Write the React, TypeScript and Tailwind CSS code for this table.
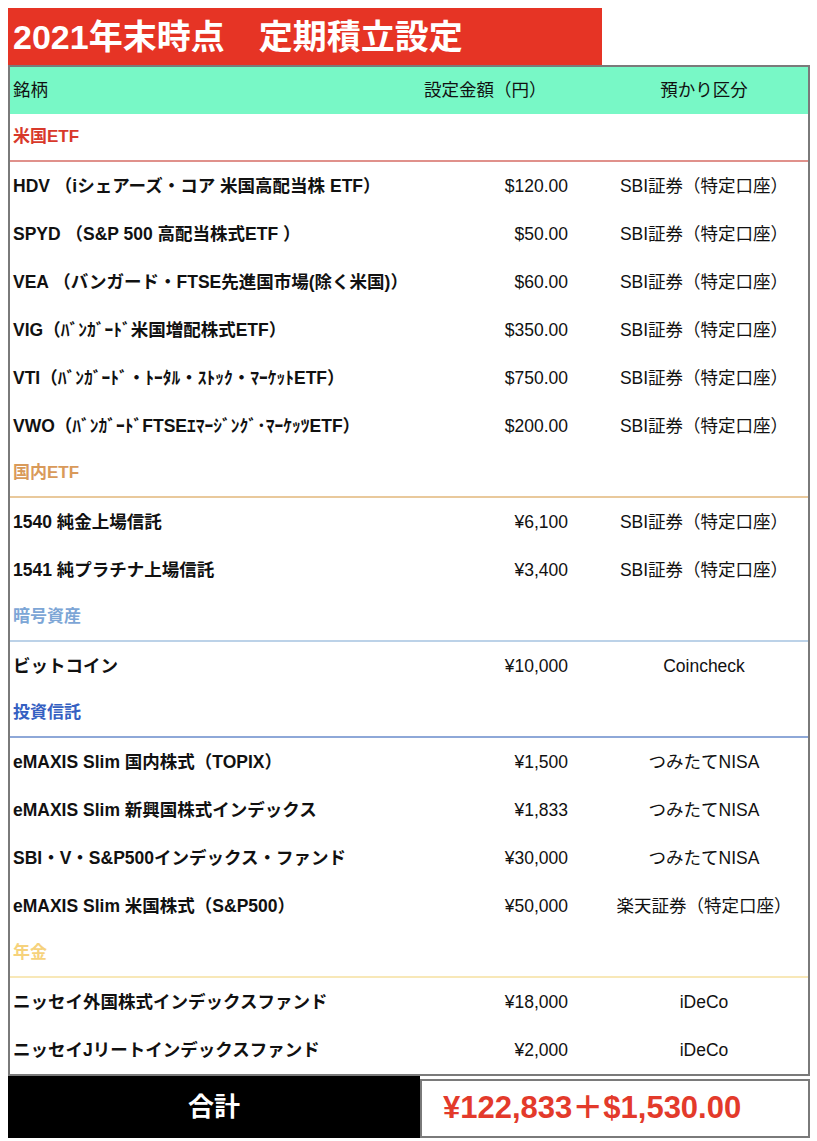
import React from "react";

type Row =
  | { kind: "section"; label: string; text: string; line: string }
  | { kind: "item"; name: string; amount: string; place: string };

const rows: Row[] = [
  { kind: "section", label: "米国ETF", text: "text-[#d8392b]", line: "border-[#e0918b]" },
  { kind: "item", name: "HDV （iシェアーズ・コア 米国高配当株 ETF）", amount: "$120.00", place: "SBI証券（特定口座）" },
  { kind: "item", name: "SPYD （S&P 500 高配当株式ETF ）", amount: "$50.00", place: "SBI証券（特定口座）" },
  { kind: "item", name: "VEA （バンガード・FTSE先進国市場(除く米国)）", amount: "$60.00", place: "SBI証券（特定口座）" },
  { kind: "item", name: "VIG（ﾊﾞﾝｶﾞｰﾄﾞ米国増配株式ETF）", amount: "$350.00", place: "SBI証券（特定口座）" },
  { kind: "item", name: "VTI（ﾊﾞﾝｶﾞｰﾄﾞ・ﾄｰﾀﾙ・ｽﾄｯｸ・ﾏｰｹｯﾄETF）", amount: "$750.00", place: "SBI証券（特定口座）" },
  { kind: "item", name: "VWO（ﾊﾞﾝｶﾞｰﾄﾞFTSEｴﾏｰｼﾞﾝｸﾞ･ﾏｰｹｯﾂETF）", amount: "$200.00", place: "SBI証券（特定口座）" },
  { kind: "section", label: "国内ETF", text: "text-[#d99a5a]", line: "border-[#e9c99c]" },
  { kind: "item", name: "1540 純金上場信託", amount: "¥6,100", place: "SBI証券（特定口座）" },
  { kind: "item", name: "1541 純プラチナ上場信託", amount: "¥3,400", place: "SBI証券（特定口座）" },
  { kind: "section", label: "暗号資産", text: "text-[#7da6d6]", line: "border-[#bcd2e8]" },
  { kind: "item", name: "ビットコイン", amount: "¥10,000", place: "Coincheck" },
  { kind: "section", label: "投資信託", text: "text-[#3560c2]", line: "border-[#8ea8d8]" },
  { kind: "item", name: "eMAXIS Slim 国内株式（TOPIX）", amount: "¥1,500", place: "つみたてNISA" },
  { kind: "item", name: "eMAXIS Slim 新興国株式インデックス", amount: "¥1,833", place: "つみたてNISA" },
  { kind: "item", name: "SBI・V・S&P500インデックス・ファンド", amount: "¥30,000", place: "つみたてNISA" },
  { kind: "item", name: "eMAXIS Slim 米国株式（S&P500）", amount: "¥50,000", place: "楽天証券（特定口座）" },
  { kind: "section", label: "年金", text: "text-[#f6d27c]", line: "border-[#f8e8b8]" },
  { kind: "item", name: "ニッセイ外国株式インデックスファンド", amount: "¥18,000", place: "iDeCo" },
  { kind: "item", name: "ニッセイJリートインデックスファンド", amount: "¥2,000", place: "iDeCo" },
];

const font = { fontFamily: '"Liberation Sans", "Noto Sans CJK JP", sans-serif' };

export default function App() {
  return (
    <div className="bg-white w-[817px] min-h-[1141px] p-2" style={font}>
      <div className="w-[594px] h-[57px] bg-[#e63425] flex items-center pl-[5px]">
        <span className="text-white font-bold text-[34px] leading-none">2021年末時点　定期積立設定</span>
      </div>
      <div className="w-[802px] border-2 border-[#7a7a7a]">
        <div className="grid grid-cols-[390px_200px_1fr] h-[47px] items-center bg-[#78f8c6] text-[17.5px] text-[#111]">
          <div className="pl-[3px]">銘柄</div>
          <div className="pl-[24px]">設定金額（円）</div>
          <div className="text-center">預かり区分</div>
        </div>
        {rows.map((r, i) =>
          r.kind === "section" ? (
            <div key={i} className={`h-[48px] flex items-center pl-[3px] border-b-2 ${r.line}`}>
              <span className={`text-[17px] font-bold ${r.text}`}>{r.label}</span>
            </div>
          ) : (
            <div key={i} className="grid grid-cols-[390px_200px_1fr] h-[48px] items-center text-[17.5px] text-[#111]">
              <div className="pl-[3px] font-bold whitespace-nowrap">{r.name}</div>
              <div className="text-right pr-[32px]">{r.amount}</div>
              <div className="text-center">{r.place}</div>
            </div>
          )
        )}
      </div>
      <div className="flex w-[802px] h-[62px]">
        <div className="w-[412px] h-[62px] bg-black flex items-center justify-center">
          <span className="text-white font-bold text-[26px]">合計</span>
        </div>
        <div className="flex-1 mt-[3px] h-[59px] border-2 border-[#7a7a7a] flex items-center pl-[21px]">
          <span className="text-[#e33a2b] font-bold text-[31px]">¥122,833＋$1,530.00</span>
        </div>
      </div>
    </div>
  );
}
